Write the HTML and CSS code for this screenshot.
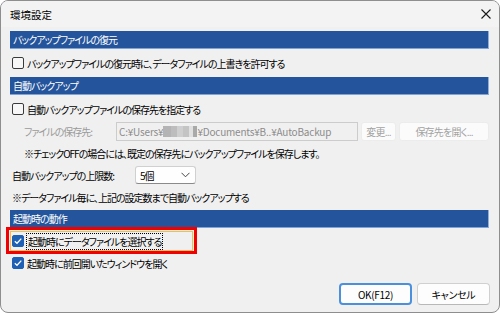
FILE: index.html
```html
<!DOCTYPE html>
<html>
    <head>
        <title>環境設定</title>
        <link rel="stylesheet" href="styles.css">
    </head>
    <body>
        <div class="window">
            <div class="titlebar">
                <span class="title">環境設定</span>
                <svg class="close" width="10" height="10" viewBox="0 0 10 10">
                    <path d="M0.5 0.5 L9.5 9.5 M9.5 0.5 L0.5 9.5" stroke="#1a1a1a" stroke-width="1.1" fill="none" />
                </svg>
            </div>

            <div class="content">
                <!-- Restore -->
                <div class="section-header">バックアップファイルの復元</div>
                <div class="section-body first">
                    <label class="row check-row">
                        <span class="checkbox"></span>
                        <span>バックアップファイルの復元時に、データファイルの上書きを許可する</span>
                    </label>
                </div>

                <!-- Auto backup -->
                <div class="section-header">自動バックアップ</div>
                <div class="section-body middle">
                    <label class="row check-row">
                        <span class="checkbox"></span>
                        <span>自動バックアップファイルの保存先を指定する</span>
                    </label>
                    <div class="row indent">
                        <span class="field-label disabled">ファイルの保存先:</span>
                        <div class="path-input">C:¥Users¥<span class="blur"></span>¥Documents¥B..¥AutoBackup</div>
                        <button class="flat-btn change-btn">変更...</button>
                        <button class="flat-btn open-btn">保存先を開く...</button>
                    </div>
                    <div class="row indent">※チェックOFFの場合には、既定の保存先にバックアップファイルを保存します。</div>
                    <div class="row plain">
                        <span class="limit-label">自動バックアップの上限数:</span>
                        <div class="select">
                            <span>5個</span>
                            <svg width="9" height="6" viewBox="0 0 9 6">
                                <polyline points="0.5,0.8 4.5,4.8 8.5,0.8" stroke="#444" stroke-width="1" fill="none" />
                            </svg>
                        </div>
                    </div>
                    <div class="row plain">※データファイル毎に、上記の設定数まで自動バックアップする</div>
                </div>

                <!-- Startup -->
                <div class="section-header">起動時の動作</div>
                <div class="section-body last">
                    <div class="row">
                        <label class="focus-box">
                            <span class="checkbox checked">
                                <svg width="10" height="10" viewBox="0 0 10 10">
                                    <polyline points="1.8,5.2 4,7.3 8.3,2.6" stroke="#fff" stroke-width="1.3" fill="none" />
                                </svg>
                            </span>
                            <span class="focus-text">起動時にデータファイルを選択する</span>
                        </label>
                    </div>
                    <label class="row check-row">
                        <span class="checkbox checked">
                            <svg width="10" height="10" viewBox="0 0 10 10">
                                <polyline points="1.8,5.2 4,7.3 8.3,2.6" stroke="#fff" stroke-width="1.3" fill="none" />
                            </svg>
                        </span>
                        <span>起動時に前回開いたウィンドウを開く</span>
                    </label>
                </div>
            </div>

            <div class="footer">
                <button class="btn default">OK(F12)</button>
                <button class="btn">キャンセル</button>
            </div>
        </div>
    </body>
</html>
```

FILE: styles.css
```css
body {
    margin: 0;
    background: #ffffff;
    font-family: "Noto Sans CJK JP", sans-serif;
    font-size: 10px;
    letter-spacing: -1px;
    font-feature-settings: "palt";
    color: #000;
}
.window {
    width: 500px;
    height: 313px;
    box-sizing: border-box;
    border: 1px solid #8e8e8e;
    border-radius: 8px;
    background: #f0f0f0;
    display: flex;
    flex-direction: column;
    overflow: hidden;
}
.titlebar {
    height: 26px;
    display: flex;
    align-items: center;
    justify-content: space-between;
    padding: 0 8px 0 9px;
    background: #f3f3f3;
}
.title {
    font-size: 10.5px;
    letter-spacing: 0;
}
.close {
    margin-top: -1px;
}
.content {
    padding: 4px 10px 0 9px;
}
.section-header {
    height: 18px;
    box-sizing: border-box;
    background: #24549b;
    border-right: 1px solid #8fb0de;
    border-bottom: 1px solid #7fa3d6;
    color: #fff;
    padding-left: 3px;
    line-height: 17px;
}
.section-body.first {
    padding: 3px 0 3px;
}
.section-body.middle {
    padding: 3px 0 2px;
}
.section-body.last {
    padding: 2px 0 0;
}
.row {
    height: 22px;
    display: flex;
    align-items: center;
    white-space: nowrap;
}
.check-row {
    padding-left: 2px;
}
.indent {
    padding-left: 14px;
}
.plain {
    padding-left: 2px;
}
.checkbox {
    width: 12px;
    height: 12px;
    box-sizing: border-box;
    border: 1px solid #3a3a3a;
    border-radius: 2px;
    background: #f7f7f7;
    margin-right: 3px;
    display: flex;
    align-items: center;
    justify-content: center;
    flex-shrink: 0;
}
.checkbox.checked {
    background: #1f5fb4;
    border-color: #1f5fb4;
}
.field-label {
    width: 92px;
}
.disabled {
    color: #9a9a9a;
}
.path-input {
    width: 242px;
    height: 19px;
    box-sizing: border-box;
    border: 1px solid #cccccc;
    background: #f0f0f0;
    color: #8c8c8c;
    letter-spacing: -0.2px;
    padding-left: 2px;
    display: flex;
    align-items: center;
    white-space: nowrap;
    overflow: hidden;
}
.blur {
    display: inline-block;
    width: 34px;
    height: 11px;
    background: linear-gradient(90deg, #b4b4b4 0 8px, #bdbdbd 8px 14px, #cfcfcf 14px 20px, #c4c4c4 20px 26px, #e0e0e0 26px 30px, #a9a9a9 30px 34px);
}
.flat-btn {
    font-family: inherit;
    font-size: 10px;
    letter-spacing: -0.8px;
    font-feature-settings: "palt";
    height: 19px;
    padding: 0;
    margin-left: 3px;
    border: 1px solid #ececec;
    border-radius: 3px;
    background: #fbfbfb;
    color: #a3a3a3;
}
.change-btn {
    width: 35px;
}
.open-btn {
    width: 90px;
}
.limit-label {
    width: 123px;
}
.select {
    width: 61px;
    height: 18px;
    box-sizing: border-box;
    border: 1px solid #d0d0d0;
    border-bottom-color: #8a8a8a;
    border-radius: 3px;
    background: #fefefe;
    display: flex;
    align-items: center;
    justify-content: space-between;
    padding: 0 5px 0 4px;
}
.focus-box {
    position: relative;
    width: 183px;
    height: 20px;
    box-sizing: border-box;
    border: 1px solid #f2c046;
    padding-left: 1px;
    display: flex;
    align-items: center;
}
/* red annotation frame */
.focus-box::after {
    content: "";
    position: absolute;
    left: -5px;
    top: -5px;
    right: -5px;
    bottom: -4px;
    border: 3px solid #f00000;
}
.focus-text {
    outline: 1px dotted #000;
    line-height: 15px;
    padding: 0 1px 0 1px;
}
.footer {
    margin-top: auto;
    display: flex;
    justify-content: flex-end;
    gap: 5px;
    padding: 0 9px 7px 0;
}
.btn {
    font-family: inherit;
    font-size: 10px;
    letter-spacing: -0.3px;
    font-feature-settings: "palt";
    width: 73px;
    height: 22px;
    border: 1px solid #d0d0d0;
    border-bottom-color: #b8b8b8;
    border-radius: 4px;
    background: #fdfdfd;
    color: #000;
    padding: 0;
}
.btn.default {
    border: 2px solid #4a90dc;
}
```
